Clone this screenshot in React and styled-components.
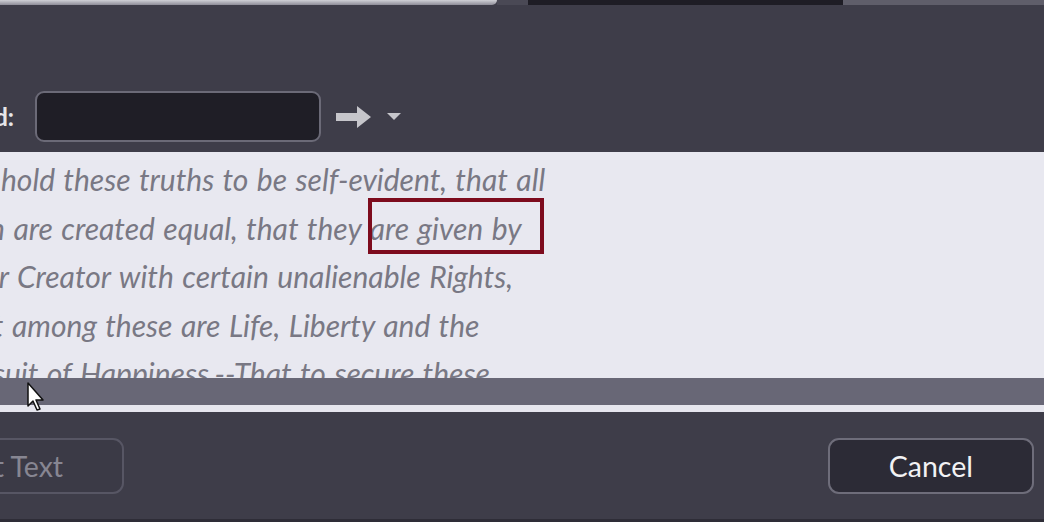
import React from 'react';
import styled, { createGlobalStyle } from 'styled-components';

const GlobalStyle = createGlobalStyle`
    html, body {
        margin: 0;
        padding: 0;
        background: #3e3d49;
    }
    body {
        font-family: 'Lato', 'Liberation Sans', sans-serif;
    }
`;

const Dialog = styled.div`
    position: relative;
    width: 1044px;
    height: 522px;
    overflow: hidden;
    background: #3e3d49;
    display: flex;
    flex-direction: column;
`;

const TopStrip = styled.div`
    display: flex;
    height: 5px;
    flex-shrink: 0;
`;

const StripPart = styled.div`
    width: ${(p) => p.w}px;
    flex-grow: ${(p) => (p.grow ? 1 : 0)};
    background: ${(p) => p.bg};
    border-radius: ${(p) => p.radius || '0'};
`;

const FindRow = styled.div`
    height: 147px;
    display: flex;
    align-items: flex-end;
    padding-bottom: 10px;
    box-sizing: border-box;
    margin-left: -40px;
`;

const FindLabel = styled.label`
    width: 54px;
    height: 51px;
    display: flex;
    align-items: center;
    justify-content: flex-end;
    font-size: 24px;
    font-weight: 700;
    color: #e6e6ea;
`;

const FindInput = styled.div`
    margin-left: 21px;
    width: 286px;
    height: 51px;
    box-sizing: border-box;
    border: 2px solid #6b6a77;
    border-radius: 9px;
    background: #1f1e26;
`;

const IconBox = styled.div`
    height: 51px;
    display: flex;
    align-items: center;
    margin-left: ${(p) => p.ml}px;
`;

const TextPane = styled.div`
    position: relative;
    height: 226px;
    background: #e8e8f0;
    overflow: hidden;
    flex-shrink: 0;
`;

const Lines = styled.div`
    margin-left: -49px;
    padding-top: 3px;
`;

const Line = styled.div`
    white-space: nowrap;
    font-style: italic;
    font-size: 30px;
    word-spacing: 1.5px;
    line-height: 48.5px;
    color: #797884;
`;

const Highlight = styled.div`
    position: absolute;
    left: 368px;
    top: 46px;
    width: 176px;
    height: 56px;
    box-sizing: border-box;
    border: 4px solid #7d0b1d;
`;

const ScrollBar = styled.div`
    height: 27px;
    background: #686776;
    flex-shrink: 0;
`;

const ScrollEdge = styled.div`
    height: 7px;
    background: #e6e6ee;
    flex-shrink: 0;
`;

const Footer = styled.div`
    flex: 1;
    display: flex;
    justify-content: space-between;
    align-items: flex-start;
    padding: 26px 10px 0 0;
    border-bottom: 3px solid #2e2d37;
`;

const Button = styled.button`
    height: 56px;
    box-sizing: border-box;
    padding: 0 59px;
    border-radius: 11px;
    font-family: 'Lato', 'Liberation Sans', sans-serif;
    font-size: 28.5px;
    border: 2px solid ${(p) => (p.disabled ? '#575664' : '#6e6d7a')};
    background: ${(p) => (p.disabled ? '#3b3a46' : '#2c2b36')};
    color: ${(p) => (p.disabled ? '#878692' : '#f2f2f4')};
    margin-left: ${(p) => p.ml || 0}px;
`;

const Cursor = styled.svg`
    position: absolute;
    left: 27px;
    top: 382px;
`;

function ArrowIcon() {
    return (
        <svg width="35" height="22" viewBox="0 0 35 22">
            <path d="M0 7 H21 V0 L35 11 L21 22 V15 H0 Z" fill="#c6c6cb" />
        </svg>
    );
}

function CaretIcon() {
    return (
        <svg width="14" height="8" viewBox="0 0 14 8">
            <path d="M0 0 H14 L7 7 Z" fill="#c6c6cb" />
        </svg>
    );
}

const lines = [
    'We hold these truths to be self-evident, that all',
    'men are created equal, that they are given by',
    'their Creator with certain unalienable Rights,',
    'that among these are Life, Liberty and the',
    'pursuit of Happiness.--That to secure these',
];

function App() {
    return (
        <>
            <GlobalStyle />
            <Dialog>
                <TopStrip>
                    <StripPart w={497} bg="linear-gradient(#d0d0d6, #8e8d98)" radius="0 0 6px 0" />
                    <StripPart w={31} bg="#4a4955" />
                    <StripPart w={315} bg="#1e1d25" />
                    <StripPart grow bg="#5f5e6a" />
                </TopStrip>
                <FindRow>
                    <FindLabel>Find:</FindLabel>
                    <FindInput />
                    <IconBox ml={15}>
                        <ArrowIcon />
                    </IconBox>
                    <IconBox ml={16}>
                        <CaretIcon />
                    </IconBox>
                </FindRow>
                <TextPane>
                    <Lines>
                        {lines.map((l) => (
                            <Line key={l}>{l}</Line>
                        ))}
                    </Lines>
                    <Highlight />
                </TextPane>
                <ScrollBar />
                <ScrollEdge />
                <Footer>
                    <Button disabled ml={-133}>Select Text</Button>
                    <Button>Cancel</Button>
                </Footer>
                <Cursor width="20" height="30" viewBox="0 0 20 30">
                    <path d="M1 1 L1 24 L6 19 L10 28 L13 27 L9 18 L16 18 Z" fill="#ffffff" stroke="#111" strokeWidth="1.5" strokeLinejoin="round" />
                </Cursor>
            </Dialog>
        </>
    );
}

export default App;
